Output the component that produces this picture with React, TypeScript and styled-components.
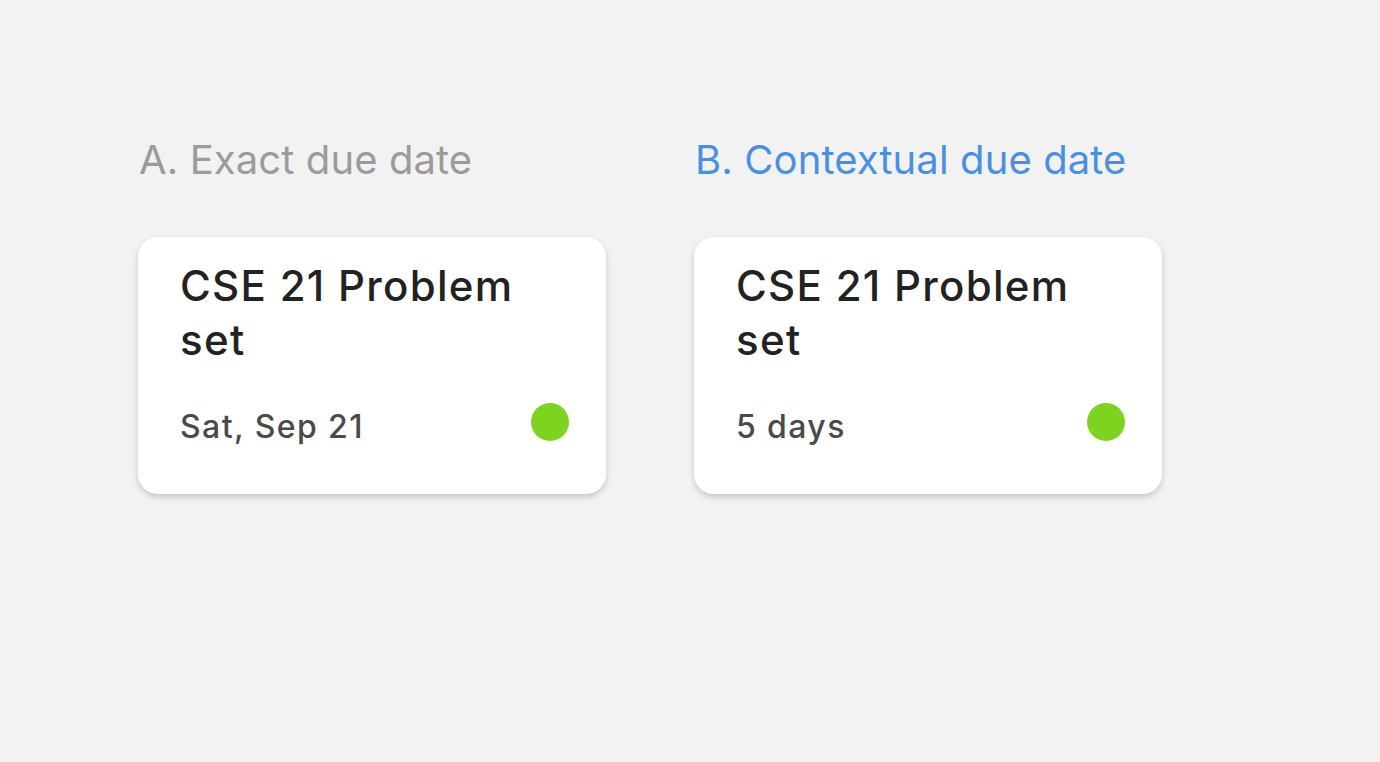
import React from "react";
import styled, { createGlobalStyle } from "styled-components";

const Global = createGlobalStyle`
  html, body { margin: 0; padding: 0; background: #f2f2f2; }
  body { font-family: Inter, "Noto Sans", sans-serif; -webkit-font-smoothing: antialiased; }
`;

const Page = styled.div`
  width: 1380px;
  height: 762px;
  box-sizing: border-box;
  padding: 136px 0 0 138px;
  display: flex;
  gap: 88px;
`;

const Column = styled.div`
  display: flex;
  flex-direction: column;
  width: 468px;
`;

const Heading = styled.h2<{ $accent?: boolean }>`
  margin: 0 0 0 1px;
  font-size: 40px;
  line-height: 48px;
  font-weight: 400;
  letter-spacing: 0.1px;
  color: ${(p) => (p.$accent ? "#4a90e2" : "#9b9b9b")};
`;

const Card = styled.div`
  margin-top: 53px;
  box-sizing: border-box;
  height: 257px;
  background: #ffffff;
  border-radius: 20px;
  box-shadow: 0 3px 6px rgba(0, 0, 0, 0.18);
  padding: 22px 37px 0 42px;
  display: flex;
  flex-direction: column;
`;

const Title = styled.div`
  font-size: 42px;
  line-height: 54px;
  font-weight: 500;
  letter-spacing: 1.3px;
  color: #222222;
  width: 380px;
`;

const Footer = styled.div`
  margin-top: 36px;
  display: flex;
  align-items: flex-start;
  justify-content: space-between;
`;

const DueText = styled.span`
  padding-top: 4px;
  font-size: 32px;
  line-height: 40px;
  font-weight: 500;
  color: #4a4a4a;
  letter-spacing: 1.4px;
`;

const Dot = styled.span`
  width: 38px;
  height: 38px;
  border-radius: 50%;
  background: #7ed321;
`;

const variants = [
  { label: "A. Exact due date", due: "Sat, Sep 21", accent: false },
  { label: "B. Contextual due date", due: "5 days", accent: true },
];

export default function App() {
  return (
    <>
      <Global />
      <Page>
        {variants.map((v) => (
          <Column key={v.label}>
            <Heading $accent={v.accent}>{v.label}</Heading>
            <Card>
              <Title>CSE 21 Problem set</Title>
              <Footer>
                <DueText>{v.due}</DueText>
                <Dot />
              </Footer>
            </Card>
          </Column>
        ))}
      </Page>
    </>
  );
}
